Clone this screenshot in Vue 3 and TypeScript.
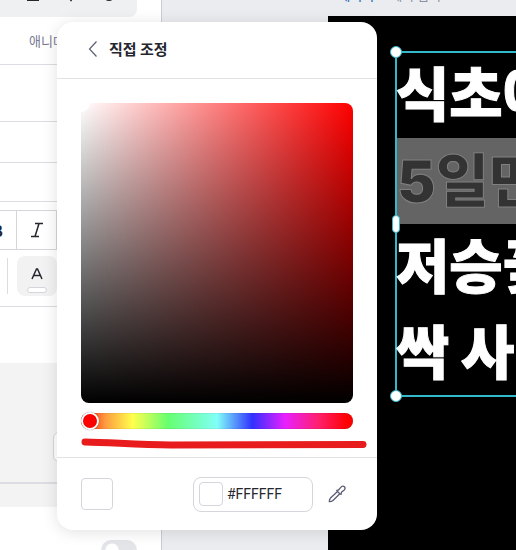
<script setup lang="ts">
import { ref } from 'vue'

const hue = ref<number>(0)
const hex = ref<string>('#FFFFFF')
const lines: { text: string; selected: boolean }[] = [
  { text: '식초에', selected: false },
  { text: '5일만에', selected: true },
  { text: '저승꽃', selected: false },
  { text: '싹 사라', selected: false },
]
</script>

<template>
  <div class="editor">
    <aside class="panel">
      <div class="tools">
        <div class="toolbar">
          <svg width="14" height="14" viewBox="0 0 14 14"><path d="M2 1V12H12V1" /></svg>
          <svg width="14" height="14" viewBox="0 0 14 14"><path d="M3 6L7 12L11 6" /></svg>
          <svg width="14" height="14" viewBox="0 0 14 14"><circle cx="7" cy="7" r="5" /></svg>
        </div>
      </div>
      <div class="tabs"><a href="#">애니메이션</a></div>
      <div class="row tall"></div>
      <div class="row mid"></div>
      <div class="row short"></div>
      <div class="format">
        <div class="group">
          <button class="cell bold" aria-label="굵게">B</button>
          <button class="cell" aria-label="기울임">
            <svg width="14" height="16" viewBox="0 0 14 16"><path d="M5 1.5H13M1 14.5H9M9 1.5L5 14.5" /></svg>
          </button>
        </div>
        <div class="colors">
          <span class="divider"></span>
          <button class="text-color" aria-label="글자 색">
            <svg width="12" height="12" viewBox="0 0 12 12"><path d="M1 11L5.5 1H6.5L11 11M3 7.500H9" /></svg>
            <span class="chip"></span>
          </button>
        </div>
      </div>
      <div class="blank"></div>
      <div class="muted">
        <button class="ghost" aria-label="더보기"></button>
      </div>
      <div class="muted-end"></div>
      <label class="switch-row"><input type="checkbox" class="switch" aria-label="효과" /></label>
    </aside>

    <main class="canvas">
      <div class="page-title"><b>1 페이지</b><span>제목 입력</span></div>
      <div class="artboard">
        <div class="textbox">
          <div class="lines">
            <p v-for="line in lines" :key="line.text" :class="{ selected: line.selected }">{{ line.text }}</p>
          </div>
          <span class="handle top"></span>
          <span class="handle side"></span>
          <span class="handle bottom"></span>
        </div>
      </div>
    </main>

    <section class="picker" role="dialog" aria-labelledby="picker-title">
      <header class="head">
        <button class="back" aria-label="뒤로">
          <svg width="10" height="18" viewBox="0 0 10 18"><path d="M8.500 1.500L1.500 9L8.500 16.500" /></svg>
        </button>
        <h2 id="picker-title">직접 조정</h2>
      </header>
      <div class="body">
        <div class="area"><span class="area-knob"></span></div>
        <input v-model="hue" class="hue" type="range" min="0" max="360" aria-label="색조" />
        <svg class="mark" width="290" height="27" viewBox="0 0 290 27">
          <path d="M4 12C30 12.500 55 14.500 90 15L282 14.500" />
        </svg>
      </div>
      <footer class="foot">
        <button class="swatch" aria-label="현재 색"></button>
        <label class="hex">
          <span class="mini"></span>
          <input v-model="hex" type="text" aria-label="색상 코드" />
        </label>
        <button class="dropper" aria-label="스포이드">
          <svg width="18" height="18" viewBox="0 0 18 18">
            <path d="M9.500 6.500L2.500 13Q1.200 14.500 1.300 16.700Q3.500 16.800 5 15.500L11.800 8.800" />
            <path d="M8.800 5.300L10.500 5L12.800 2.300C14 .9 15.500 .9 16.400 1.700C17.200 2.600 17.300 4 16 5.200L13.400 7.300L13.200 9.300L11.800 8.800L9.500 6.500Z" />
          </svg>
        </button>
      </footer>
    </section>
  </div>
</template>

<style>
body {
  background: #fff;
}
</style>

<style scoped>
* {
  box-sizing: border-box;
}
.editor {
  position: relative;
  display: flex;
  height: 100vh;
  overflow: hidden;
  font-family: "Noto Sans CJK KR", "Noto Sans", sans-serif;
  font-size: 14px;
  color: #25262e;
}
button {
  padding: 0;
  border: 0;
  background: none;
  font: inherit;
  color: inherit;
}
svg {
  display: block;
  fill: none;
  stroke: #25262e;
  stroke-width: 1.5;
}
.panel {
  display: flex;
  flex-direction: column;
  flex: none;
  width: 162px;
  border-right: 1px solid #cbccd2;
  background: #fff;
}
.panel > * {
  flex: none;
}
.tools {
  padding: 0 24px 0 0;
}
.toolbar {
  display: flex;
  align-items: flex-start;
  gap: 24px;
  height: 17px;
  padding-left: 26px;
  border-radius: 0 0 8px 0;
  background: #eff0f2;
}
.toolbar svg {
  margin-top: -12px;
  stroke-width: 2;
}
.tabs {
  display: flex;
  align-items: center;
  height: 48px;
  padding-left: 29px;
  border-bottom: 1px solid #dcdde2;
}
.tabs a {
  font-size: 13px;
  line-height: 20px;
  color: #75798f;
  text-decoration: none;
}
.row {
  border-bottom: 1px solid #dcdde2;
}
.tall {
  height: 57px;
}
.mid {
  height: 41px;
}
.short {
  height: 39px;
}
.format {
  display: flex;
  flex-direction: column;
  gap: 6px;
  padding: 8px 0 10px;
  border-bottom: 1px solid #dcdde2;
}
.group {
  display: flex;
  width: 57px;
  height: 40px;
  border: 1px solid #d5d6dc;
  border-left: 0;
}
.cell {
  display: grid;
  place-items: center;
  flex: 1;
}
.bold {
  flex: none;
  justify-content: end;
  width: 17px;
  padding-right: 13px;
  border-right: 1px solid #d5d6dc;
  font-size: 16px;
  font-weight: 700;
}
.colors {
  display: flex;
  align-items: center;
  gap: 9px;
  padding-left: 7px;
}
.divider {
  width: 1px;
  height: 36px;
  background: #dcdde2;
}
.text-color {
  display: flex;
  flex-direction: column;
  align-items: center;
  justify-content: flex-end;
  gap: 7px;
  width: 40px;
  height: 40px;
  padding-bottom: 3px;
  border-radius: 8px;
  background: #f2f2f3;
}
.chip {
  width: 20px;
  height: 6px;
  border: 1px solid #d5d6dc;
  border-radius: 3px;
  background: #fff;
}
.blank {
  height: 56px;
}
.muted {
  display: flex;
  align-items: flex-end;
  justify-content: flex-end;
  height: 121px;
  padding: 0 24px 20px 0;
  border-bottom: 2px solid #dcdde2;
  background: #f3f3f3;
}
.ghost {
  width: 84px;
  height: 30px;
  border: 1px solid #d5d6dc;
  border-radius: 6px;
  background: #fff;
}
.muted-end {
  height: 23px;
  background: #f3f3f3;
}
.switch-row {
  display: flex;
  justify-content: flex-end;
  padding: 33px 24px 0 0;
}
.switch {
  appearance: none;
  width: 36px;
  height: 20px;
  margin: 0;
  border-radius: 10px;
  background: radial-gradient(circle at 11px 10px, #fff 6px, #e4e5e9 7px);
}
.canvas {
  display: flex;
  flex-direction: column;
  flex: 1;
  min-width: 0;
  padding-left: 166px;
  background: #ebecef;
}
.page-title {
  display: flex;
  align-items: flex-end;
  flex: none;
  gap: 16px;
  height: 3px;
  margin-bottom: 13px;
  font-size: 13px;
  line-height: 16px;
  white-space: nowrap;
  color: #8b8fa3;
}
.page-title b {
  font-weight: 500;
  color: #3878c0;
}
.artboard {
  flex: 1;
  padding: 35px 0 0 67px;
  background: #000;
}
.textbox {
  position: relative;
  width: 400px;
  border: 2px solid #32b9cb;
}
.lines {
  margin: -1px 0;
}
.lines p {
  height: 86px;
  margin: 0 0 0 -1px;
  font-family: Inter, "Noto Sans CJK KR", sans-serif;
  font-size: 58px;
  font-weight: 900;
  line-height: 86px;
  white-space: nowrap;
  color: #fff;
  -webkit-text-stroke: 1px #fff;
}
.lines p.selected {
  margin-left: 0;
  background: #646464;
  color: #333;
  -webkit-text-stroke: 1px #808080;
}
.handle {
  position: absolute;
  left: -7px;
  width: 12px;
  height: 12px;
  border: 1px solid #32b9cb;
  border-radius: 6px;
  background: #fff;
}
.top {
  top: -7px;
}
.side {
  top: calc(50% - 9px);
  left: -5px;
  width: 8px;
  height: 18px;
}
.bottom {
  bottom: -7px;
}
.picker {
  position: absolute;
  top: 22px;
  left: 57px;
  width: 320px;
  border-radius: 16px;
  background: #fff;
  box-shadow: 0 2px 16px rgba(0, 0, 0, 0.12);
}
.head {
  display: flex;
  align-items: center;
  gap: 11px;
  height: 57px;
  padding: 0 0 2px 31px;
  border-bottom: 1px solid #e2e3e7;
}
.back svg {
  stroke: #5b5e73;
  stroke-width: 1.2;
}
.head h2 {
  margin: 0;
  font-size: 15px;
  font-weight: 700;
  line-height: 22px;
}
.body {
  padding: 24px 24px 0;
  border-bottom: 1px solid #e2e3e7;
}
.area {
  position: relative;
  height: 300px;
  overflow: hidden;
  border-radius: 8px;
  background: linear-gradient(to top, #000, transparent), linear-gradient(to right, #fff, #f00);
}
.area-knob {
  position: absolute;
  top: -9px;
  left: -9px;
  width: 18px;
  height: 18px;
  border: 2px solid #fff;
  border-radius: 9px;
  background: #fff;
}
.hue {
  appearance: none;
  display: block;
  width: 100%;
  height: 18px;
  margin: 9px 0 0;
  background: none;
}
.hue::-webkit-slider-runnable-track {
  height: 16px;
  border-radius: 8px;
  background: linear-gradient(to right, #f00 0%, #ff9c40 9%, #ffff4d 19%, #66ff70 32%, #80fff8 50%, #3030ff 63%, #e820ff 75%, #ff2070 87%, #f00 98%);
  box-shadow: inset 0 0 1px rgba(0, 0, 0, 0.5);
}
.hue::-webkit-slider-thumb {
  appearance: none;
  width: 18px;
  height: 18px;
  margin-top: -1px;
  border: 2px solid #fff;
  border-radius: 9px;
  background: #f00;
  box-shadow: inset 0 0 1px rgba(0, 0, 0, 0.3), 0 0 1px rgba(0, 0, 0, 0.6);
}
.mark {
  overflow: visible;
}
.mark path {
  stroke: #e81c1c;
  stroke-width: 7;
  stroke-linecap: round;
}
.foot {
  display: flex;
  align-items: center;
  height: 72px;
  padding: 0 31px 0 24px;
}
.swatch {
  width: 32px;
  height: 32px;
  margin-right: auto;
  border: 1px solid #d5d6dc;
  border-radius: 4px;
  background: #fff;
}
.hex {
  display: flex;
  align-items: center;
  gap: 4px;
  width: 120px;
  height: 35px;
  padding: 0 5px;
  border: 1px solid #d5d6dc;
  border-radius: 8px;
}
.mini {
  flex: none;
  width: 24px;
  height: 24px;
  border: 1px solid #d5d6dc;
  border-radius: 4px;
}
.hex input {
  flex: 1;
  min-width: 0;
  padding: 0;
  border: 0;
  outline: 0;
  background: none;
  font-family: Roboto, sans-serif;
  font-size: 14px;
  line-height: 20px;
  color: #25262e;
}
.dropper {
  margin-left: 15px;
}
.dropper svg {
  stroke: #5b5e73;
  stroke-width: 1.3;
  stroke-linejoin: round;
}
</style>
